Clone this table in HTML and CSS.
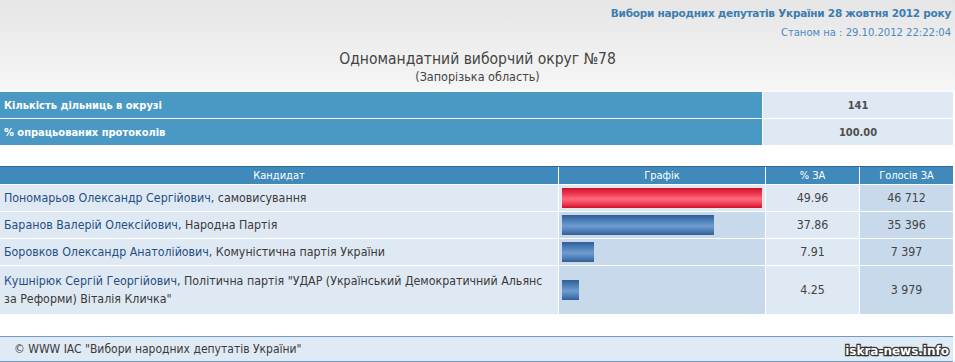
FILE: index.html
```html
<!DOCTYPE html>
<html lang="uk">
<head>
<meta charset="utf-8">
<title>Вибори народних депутатів України</title>
<link rel="stylesheet" href="styles.css">
</head>
<body>
<div class="page">
  <div class="top">
    <div class="election">Вибори народних депутатів України 28 жовтня 2012 року</div>
    <div class="stamp">Станом на : 29.10.2012 22:22:04</div>
  </div>
  <div class="title">
    <div class="district">Одномандатний виборчий округ №78</div>
    <div class="region">(Запорізька область)</div>
  </div>
  <table class="info">
    <tr><td class="label">Кількість дільниць в окрузі</td><td class="value">141</td></tr>
    <tr><td class="label">% опрацьованих протоколів</td><td class="value">100.00</td></tr>
  </table>
  <table class="results">
    <thead>
      <tr><th class="c-name">Кандидат</th><th class="c-graph">Графік</th><th class="c-pct">% ЗА</th><th class="c-votes">Голосів ЗА</th></tr>
    </thead>
    <tbody>
      <tr class="win">
        <td class="name"><span class="person">Пономарьов Олександр Сергійович,</span> самовисування</td>
        <td class="graph"><div class="bar red" style="width:200px"></div></td>
        <td class="pct">49.96</td><td class="votes">46 712</td>
      </tr>
      <tr>
        <td class="name"><span class="person">Баранов Валерій Олексійович,</span> Народна Партія</td>
        <td class="graph"><div class="bar" style="width:152px"></div></td>
        <td class="pct">37.86</td><td class="votes">35 396</td>
      </tr>
      <tr>
        <td class="name"><span class="person">Боровков Олександр Анатолійович,</span> Комуністична партія України</td>
        <td class="graph"><div class="bar" style="width:32px"></div></td>
        <td class="pct">7.91</td><td class="votes">7 397</td>
      </tr>
      <tr class="tall">
        <td class="name"><span class="person">Кушнірюк Сергій Георгійович,</span> Політична партія "УДАР (Український Демократичний Альянс<br>за Реформи) Віталія Кличка"</td>
        <td class="graph"><div class="bar" style="width:17px"></div></td>
        <td class="pct">4.25</td><td class="votes">3 979</td>
      </tr>
    </tbody>
  </table>
  <div class="footer">
    <span class="copy">© WWW IAC "Вибори народних депутатів України"</span>
    <span class="mark">iskra-news.info</span>
  </div>
</div>
</body>
</html>
```
FILE: styles.css
```css
html, body {
  margin: 0;
  padding: 0;
}
body {
  background: linear-gradient(#e5e5e5 0, #efefef 50px, #f6f6f6 90px, #ffffff 92px) no-repeat;
  background-size: 100% 92px;
  background-color: #fff;
  font-family: "DejaVu Sans", Verdana, sans-serif;
  font-stretch: semi-condensed;
  color: #333;
}
.page {
  width: 953px;
}
.top {
  text-align: right;
  padding: 6px 0 0 0;
  height: 40px;
  box-sizing: border-box;
}
.election {
  font-weight: bold;
  font-size: 10.5px;
  font-stretch: normal;
  color: #3d7db2;
  letter-spacing: -0.25px;
  line-height: 14px;
  padding-right: 2px;
}
.stamp {
  font-size: 10px;
  font-stretch: normal;
  color: #4a8ac2;
  line-height: 14px;
  margin-top: 6px;
  padding-right: 2px;
}
.title {
  width: 955px;
  text-align: center;
  color: #444;
  height: 52px;
  padding-top: 9px;
  box-sizing: border-box;
}
.district {
  font-size: 15.5px;
  line-height: 20px;
}
.region {
  font-size: 12.5px;
  line-height: 16px;
}
table {
  border-collapse: collapse;
  width: 953px;
  table-layout: fixed;
}
.info td {
  height: 26px;
  padding: 0;
  border: 1px solid #fff;
  border-left: 0;
  font-size: 11px;
  font-weight: bold;
}
.info tr:first-child td { border-top: 0; }
.info .label {
  background: #4a99c5;
  color: #fff;
  padding-left: 4px;
  width: 758px;
}
.info .value {
  background: #dfe9f3;
  color: #4e4e4e;
  text-align: center;
  border-right: 0;
}
.results {
  margin-top: 20px;
}
.results th {
  background: #3f89bb;
  color: #fff;
  font-weight: normal;
  font-size: 11px;
  height: 17px;
  padding: 0;
  border-top: 1px solid #2c6d9c;
  border-left: 1px solid #fff;
  line-height: 16px;
}
.results th:first-child { border-left: 0; }
.c-name { width: 558px; }
.c-graph { width: 206px; }
.c-pct { width: 93px; }
.results td {
  border-top: 1px solid #fff;
  border-left: 1px solid #fff;
  padding: 0;
  height: 26px;
  font-size: 12.3px;
}
.results td:first-child { border-left: 0; }
.results .name {
  background: #dfe9f3;
  padding-left: 4px;
  color: #3a3a3a;
  line-height: 18px;
}
.person { color: #1f4f85; }
.results .graph {
  background: #c7d9eb;
  padding-left: 3px;
}
.results .win .graph { background: #dfe7f0; }
.results .pct {
  background: #dfe9f3;
  text-align: center;
  color: #444;
}
.results .votes {
  background: #c7d9eb;
  text-align: center;
  color: #444;
}
.results .tall td { height: 48px; }
.results .tall .name { height: 36px; padding-top: 6px; padding-bottom: 6px; }
.bar {
  height: 20px;
  background: linear-gradient(#2f5f96 0, #5586be 35%, #6f9dd2 55%, #4d7db5 80%, #325f93 100%);
}
.bar.red {
  background: linear-gradient(#d0102a 0, #ee3a52 30%, #ff6a7e 55%, #f03a52 80%, #cc0f28 100%);
}
.footer {
  margin-top: 22px;
  height: 24px;
  background: #e0eaf4;
  border-top: 1px solid #6f9cc0;
  border-bottom: 1px solid #6f9cc0;
  display: flex;
  align-items: center;
  justify-content: space-between;
  padding: 0 0 0 14px;
}
.copy {
  font-size: 12px;
  color: #3a3a3a;
}
.mark {
  font-family: "DejaVu Sans", sans-serif;
  font-stretch: normal;
  font-weight: bold;
  font-size: 12px;
  color: #fff;
  -webkit-text-stroke: 2.4px #333;
  paint-order: stroke fill;
  letter-spacing: 0;
  margin-right: 4px;
  margin-top: 4px;
}
```
